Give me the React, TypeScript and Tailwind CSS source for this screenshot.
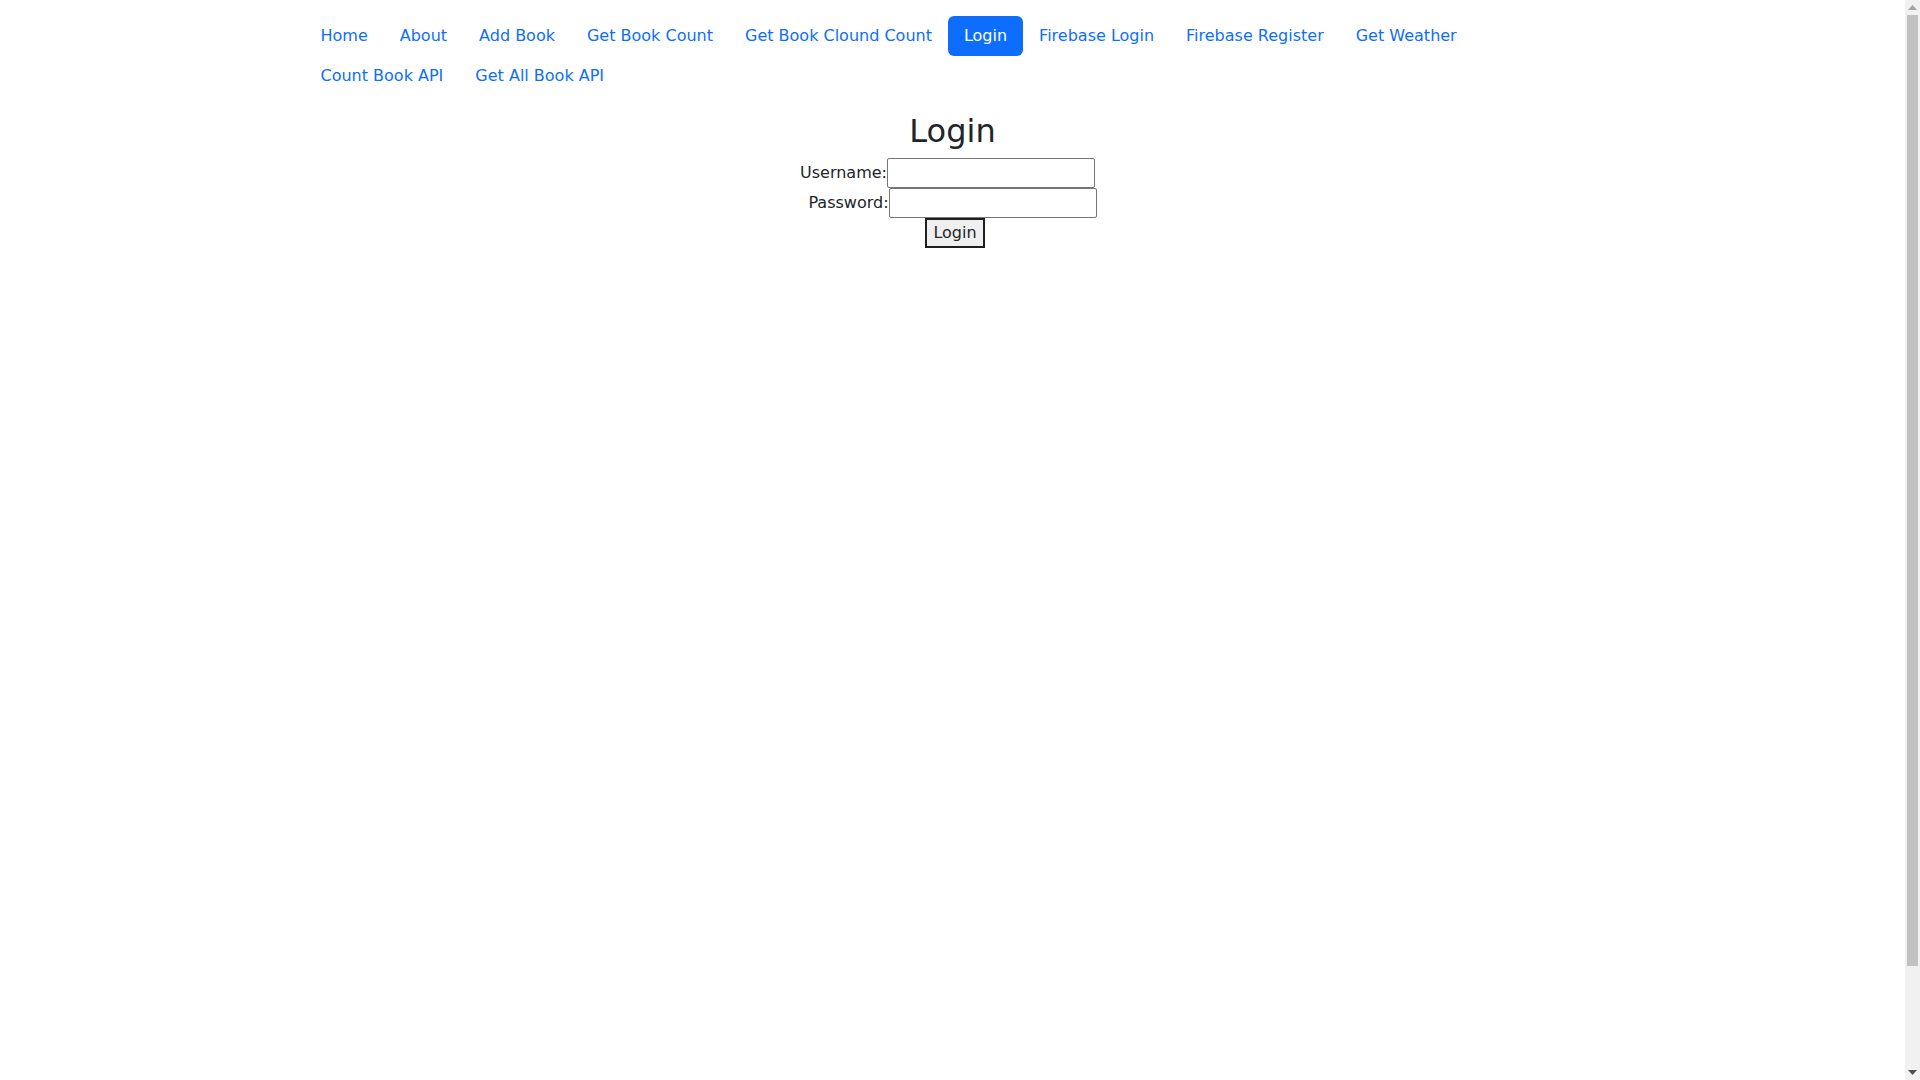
import { useState } from 'react';

const links = [
  'Home',
  'About',
  'Add Book',
  'Get Book Count',
  'Get Book Clound Count',
  'Login',
  'Firebase Login',
  'Firebase Register',
  'Get Weather',
  'Count Book API',
  'Get All Book API',
];

function Scrollbar() {
  return (
    <div className="w-[15px] shrink-0 flex flex-col bg-[#f1f1f1]">
      <div className="h-[15px] flex items-center justify-center">
        <svg width="9" height="5" viewBox="0 0 9 5">
          <polygon points="0,5 9,5 4.5,0" fill="#a3a3a3" />
        </svg>
      </div>
      <div className="flex-1 flex flex-col px-[2px]">
        <div className="h-[951px] bg-[#c1c1c1]" />
      </div>
      <div className="h-[15px] flex items-center justify-center">
        <svg width="9" height="5" viewBox="0 0 9 5">
          <polygon points="0,0 9,0 4.5,5" fill="#505050" />
        </svg>
      </div>
    </div>
  );
}

export default function App() {
  const [active, setActive] = useState('Login');
  const [username, setUsername] = useState('');
  const [password, setPassword] = useState('');

  return (
    <div
      className="flex h-screen overflow-hidden bg-white text-[#212529] text-base leading-6"
      style={{ fontFamily: '"DejaVu Sans", "Liberation Sans", sans-serif' }}
    >
      <div className="flex-1 min-w-0">
        <div className="mx-auto max-w-[1320px] px-3">
          {/* Nav pills */}
          <ul className="flex flex-wrap pt-4">
            {links.map((label) => (
              <li key={label}>
                <button
                  onClick={() => setActive(label)}
                  className={`block px-4 py-2 rounded-[6px] ${
                    active === label ? 'bg-[#0d6efd] text-white' : 'text-[#0d6efd]'
                  }`}
                >
                  {label}
                </button>
              </li>
            ))}
          </ul>

          {/* Login form */}
          <div className="flex flex-col items-center pt-[16px]">
            <h2 className="text-[32px] leading-[1.2] mb-[8px]">Login</h2>
            <div className="flex items-center h-[30px] mr-[10px]">
              <label>Username:</label>
              <input
                value={username}
                onChange={(e) => setUsername(e.target.value)}
                className="w-[208px] h-[30px] border border-[#767676] rounded-[2px] px-[2px] outline-none"
              />
            </div>
            <div className="flex items-center h-[30px]">
              <label>Password:</label>
              <input
                type="password"
                value={password}
                onChange={(e) => setPassword(e.target.value)}
                className="w-[208px] h-[30px] border border-[#767676] rounded-[2px] px-[2px] outline-none"
              />
            </div>
            <button className="ml-[5px] h-[30px] px-[6px] border-2 border-[#1f1f1f] bg-[#efefef] leading-6">
              Login
            </button>
          </div>
        </div>
      </div>
      <Scrollbar />
    </div>
  );
}
